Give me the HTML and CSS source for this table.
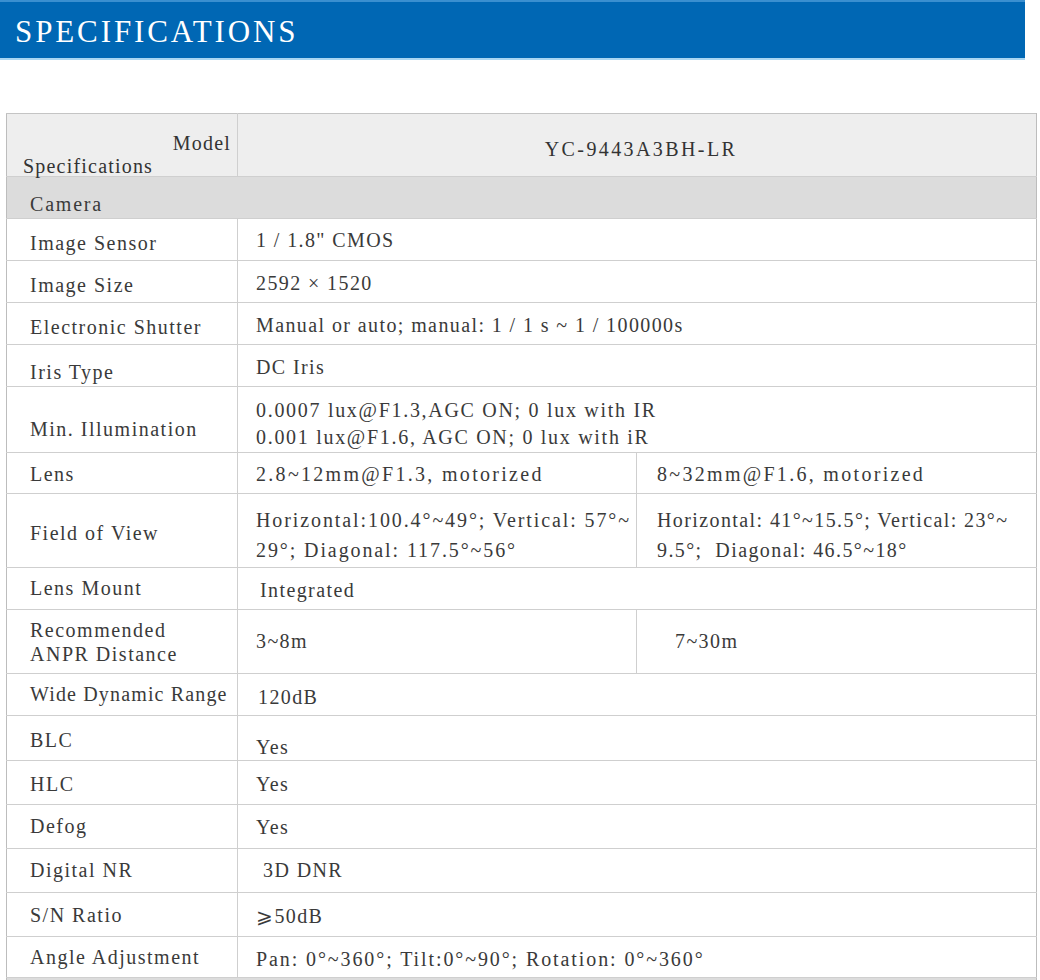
FILE: index.html
```html
<!DOCTYPE html>
<html>
<head>
<meta charset="utf-8">
<link rel="stylesheet" href="styles.css">
</head>
<body>
<div class="banner"><h1 class="banner-title">SPECIFICATIONS</h1></div>
<table class="spec">
  <colgroup><col class="c1"><col class="c2"><col class="c3"></colgroup>
  <tr class="r-head">
    <td class="diag"><div class="diag-in"><span class="d-model">Model</span><span class="d-spec">Specifications</span></div></td>
    <td colspan="2" class="model">YC-9443A3BH-LR</td>
  </tr>
  <tr class="r-sec"><td colspan="3" class="sec">Camera</td></tr>
  <tr class="r42"><td class="lab p8">Image Sensor</td><td colspan="2" class="val p2">1 / 1.8" CMOS</td></tr>
  <tr class="r42"><td class="lab p8">Image Size</td><td colspan="2" class="val p4">2592 × 1520</td></tr>
  <tr class="r42"><td class="lab p8">Electronic Shutter</td><td colspan="2" class="val p4">Manual or auto; manual: 1 / 1 s ~ 1 / 100000s</td></tr>
  <tr class="r42"><td class="lab p14">Iris Type</td><td colspan="2" class="val p4">DC Iris</td></tr>
  <tr class="r66"><td class="lab p20">Min. Illumination</td><td colspan="2" class="val two">0.0007 lux@F1.3,AGC ON; 0 lux with IR<br>0.001 lux@F1.6, AGC ON; 0 lux with iR</td></tr>
  <tr class="r41"><td class="lab p2">Lens</td><td class="val wide p2">2.8~12mm@F1.3, motorized</td><td class="val wide v3 p2">8~32mm@F1.6, motorized</td></tr>
  <tr class="r74"><td class="lab p6">Field of View</td><td class="val fov">Horizontal:100.4°~49°; Vertical: 57°~<br>29°; Diagonal: 117.5°~56°</td><td class="val v3 fov fov-r">Horizontal: 41°~15.5°; Vertical: 23°~<br>9.5°;&nbsp; Diagonal: 46.5°~18°</td></tr>
  <tr class="r42"><td class="lab p0">Lens Mount</td><td colspan="2" class="val in4 p4">Integrated</td></tr>
  <tr class="r64"><td class="lab two">Recommended<br>ANPR Distance</td><td class="val p0">3~8m</td><td class="val v3b p0">7~30m</td></tr>
  <tr class="r42"><td class="lab tight p0">Wide Dynamic Range</td><td colspan="2" class="val in2 p6">120dB</td></tr>
  <tr class="r45"><td class="lab p4">BLC</td><td colspan="2" class="val p18">Yes</td></tr>
  <tr class="r44"><td class="lab p4">HLC</td><td colspan="2" class="val p4">Yes</td></tr>
  <tr class="r44"><td class="lab p0">Defog</td><td colspan="2" class="val p2">Yes</td></tr>
  <tr class="r44"><td class="lab p0">Digital NR</td><td colspan="2" class="val in7 p0">3D DNR</td></tr>
  <tr class="r44"><td class="lab p2">S/N Ratio</td><td colspan="2" class="val p2">⩾50dB</td></tr>
  <tr class="r41"><td class="lab p0">Angle Adjustment</td><td colspan="2" class="val angle p4">Pan: 0°~360°; Tilt:0°~90°; Rotation: 0°~360°</td></tr>
  <tr class="r-sec"><td colspan="3" class="sec"></td></tr>
</table>
</body>
</html>
```

FILE: styles.css
```css
html, body {
  margin: 0;
  padding: 0;
  background: #ffffff;
}
body {
  font-family: "Liberation Serif", "Times New Roman", serif;
  color: #3a3a3a;
}
.banner {
  width: 1025px;
  height: 56px;
  background: #0067b4;
  border-top: 2px solid #3a8fd0;
  border-bottom: 2px solid #a9d6f2;
  display: flex;
  align-items: center;
}
.banner-title {
  margin: 0 0 0 15px;
  font-weight: normal;
  font-size: 31px;
  letter-spacing: 2.9px;
  color: #ffffff;
  line-height: 1;
  padding-top: 3px;
}
.spec {
  margin: 53px 0 0 6px;
  width: 1030px;
  border-collapse: collapse;
  table-layout: fixed;
  font-size: 20px;
}
.c1 { width: 231px; }
.c2 { width: 399px; }
.c3 { width: 400px; }
.spec td {
  box-sizing: border-box;
  border: 1px solid #cfcfcf;
  padding: 0;
  vertical-align: middle;
  white-space: nowrap;
}
.spec tr > td:first-child { border-left-color: #bdbdbd; }
.spec tr > td:last-child { border-right-color: #bdbdbd; }
.r-head td {
  height: 63px;
  background: #eeeeee;
  border-top-color: #c4c4c4;
}
.diag {
  background: linear-gradient(to bottom left, transparent calc(50% - 1px), #dadada 50%, transparent calc(50% + 1px)), #eeeeee;
}
.diag-in {
  height: 62px;
  box-sizing: border-box;
  display: flex;
  flex-direction: column;
  justify-content: flex-start;
  padding: 17px 6px 0 16px;
  letter-spacing: 1.2px;
  color: #333;
}
.d-model {
  align-self: flex-end;
  line-height: 24px;
}
.d-spec {
  line-height: 22px;
}
.spec .model {
  text-align: center;
  letter-spacing: 2.4px;
  color: #333;
  padding-top: 8px;
  padding-left: 8px;
}
.r-sec td { height: 42px; }
.spec .sec {
  background: #dcdcdc;
  padding: 13px 0 0 23px;
  letter-spacing: 1.8px;
}
.spec .lab {
  padding-left: 23px;
  letter-spacing: 1.5px;
}
.spec .lab.tight { letter-spacing: 1.15px; }
.spec .lab.two {
  line-height: 24px;
}
.spec .val {
  padding-left: 18px;
  letter-spacing: 1.4px;
}
.spec .val.wide { letter-spacing: 2.3px; }
.spec .val.angle { letter-spacing: 1.9px; }
.spec .val.two {
  line-height: 27px;
  padding-top: 9px;
  letter-spacing: 1.7px;
}
.spec .val.fov {
  line-height: 30px;
  padding-top: 8px;
  letter-spacing: 1.9px;
}
.spec .val.fov-r { letter-spacing: 1.4px; }
.spec .v3 { padding-left: 20px; }
.spec .v3b { padding-left: 38px; }
.spec .in4 { padding-left: 22px; }
.spec .in2 { padding-left: 20px; }
.spec .in7 { padding-left: 25px; }
.spec .p0 { padding-top: 0; }
.spec .p2 { padding-top: 2px; }
.spec .p4 { padding-top: 4px; }
.spec .p6 { padding-top: 6px; }
.spec .p8 { padding-top: 8px; }
.spec .p14 { padding-top: 14px; }
.spec .p18 { padding-top: 18px; }
.spec .p20 { padding-top: 20px; }
.r41 td { height: 41px; }
.r42 td { height: 42px; }
.r44 td { height: 44px; }
.r45 td { height: 45px; }
.r64 td { height: 64px; }
.r66 td { height: 66px; }
.r74 td { height: 74px; }
```
